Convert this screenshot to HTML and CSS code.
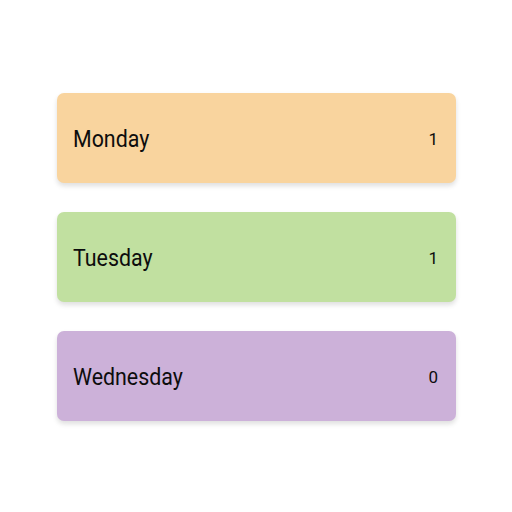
FILE: index.html
```html
<!DOCTYPE html>
<html>
<head>
<meta charset="utf-8">
<link rel="stylesheet" href="styles.css">
</head>
<body>
<div class="list">
  <div class="card monday"><span class="day">Monday</span><span class="count">1</span></div>
  <div class="card tuesday"><span class="day">Tuesday</span><span class="count">1</span></div>
  <div class="card wednesday"><span class="day">Wednesday</span><span class="count">0</span></div>
</div>
</body>
</html>
```
FILE: styles.css
```css
html, body {
  margin: 0;
  padding: 0;
  background: #ffffff;
}
body {
  width: 512px;
  height: 512px;
  font-family: Roboto, "Liberation Sans", sans-serif;
  color: #0d0d0d;
}
.list {
  display: flex;
  flex-direction: column;
  gap: 29px;
  padding: 93px 0 0 57px;
  width: 399px;
}
.card {
  height: 90px;
  border-radius: 7px;
  display: flex;
  align-items: center;
  justify-content: space-between;
  padding: 0 18px 0 16px;
  box-shadow: 0 3px 5px rgba(0,0,0,0.13);
}
.day {
  display: inline-block;
  font-size: 23px;
  transform: scaleX(0.93);
  transform-origin: left center;
  padding-top: 2px;
}
.count {
  font-size: 17px;
  padding-top: 1px;
}
.monday { background: #f9d49e; }
.tuesday { background: #c1e0a0; }
.wednesday { background: #ccb1d9; }
```
